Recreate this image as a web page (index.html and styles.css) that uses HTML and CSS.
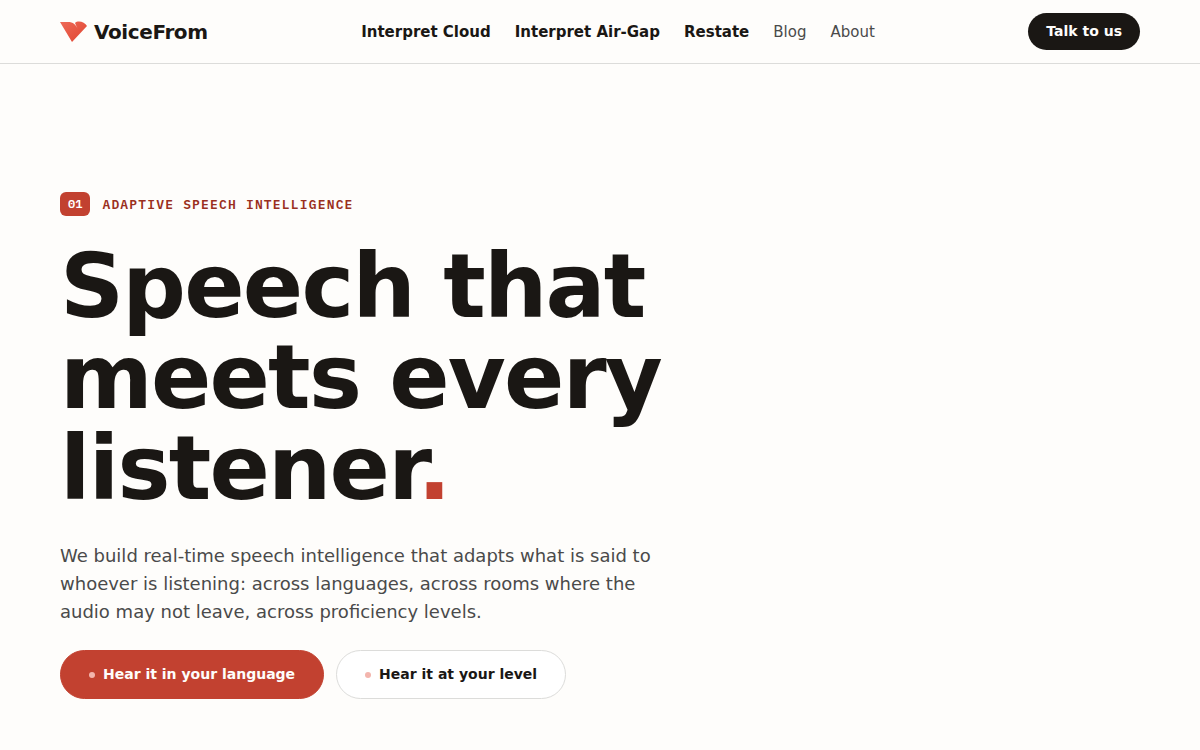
FILE: index.html
```html
<!doctype html>
<html lang="en">
<head>
    <meta charset="UTF-8">
    <meta name="viewport" content="width=device-width, initial-scale=1">
    <title>VoiceFrom</title>
    <link rel="stylesheet" href="styles.css">
</head>
<body>
    <header class="site-header">
        <div class="container nav">
            <a href="#" class="brand">
                <svg class="brand-mark" viewBox="0 0 27 22" aria-hidden="true">
                    <defs>
                        <linearGradient id="mark" x1="0" y1="0" x2="1" y2="1">
                            <stop offset="0" stop-color="#ee6a58"/>
                            <stop offset="1" stop-color="#e0442f"/>
                        </linearGradient>
                    </defs>
                    <path fill="url(#mark)" d="M0 1h8c5 0 8 2 11 10L15 2c3-3 10-1 12 3L12 21z"/>
                </svg>
                VoiceFrom
            </a>
            <nav class="nav-links">
                <a href="#" class="product">Interpret Cloud</a>
                <a href="#" class="product">Interpret Air-Gap</a>
                <a href="#" class="product">Restate</a>
                <a href="#">Blog</a>
                <a href="#">About</a>
            </nav>
            <a href="#" class="talk">Talk to us</a>
        </div>
    </header>
    <main class="container hero">
        <p class="eyebrow"><span class="num">01</span>Adaptive speech intelligence</p>
        <h1>Speech that meets every listener<span class="dot">.</span></h1>
        <p class="lead">We build real-time speech intelligence that adapts what is said to whoever is listening: across languages, across rooms where the audio may not leave, across proficiency levels.</p>
        <div class="actions">
            <button type="button" class="btn btn-primary">Hear it in your language</button>
            <button type="button" class="btn btn-light">Hear it at your level</button>
        </div>
    </main>
</body>
</html>
```
FILE: styles.css
```css
* {
    box-sizing: border-box;
}
body {
    margin: 0;
    background: #fefdfb;
    color: #1a1714;
    font-family: "DejaVu Sans", sans-serif;
}
a {
    color: inherit;
    text-decoration: none;
}
.container {
    max-width: 1200px;
    margin: 0 auto;
    padding: 0 60px;
}
.site-header {
    border-bottom: 1px solid #dcdcda;
}
.nav {
    display: flex;
    align-items: center;
    justify-content: space-between;
    height: 63px;
}
.brand {
    display: flex;
    align-items: center;
    gap: 7px;
    font-size: 20px;
    font-weight: bold;
    letter-spacing: -0.02em;
}
.brand-mark {
    width: 27px;
    height: 22px;
}
.nav-links {
    display: flex;
    gap: 24px;
    font-size: 15px;
    color: #4a4a4a;
}
.nav-links .product {
    color: #1a1714;
    font-weight: bold;
}
.talk {
    padding: 10px 18px;
    border-radius: 20px;
    background: #1a1714;
    color: #fefdfb;
    font-size: 14px;
    line-height: 17px;
    font-weight: bold;
}
.hero {
    padding-top: 128px;
    padding-bottom: 52px;
}
.eyebrow {
    display: flex;
    align-items: center;
    gap: 12px;
    margin: 0 0 25px;
    color: #9a2f20;
    font-family: "IBM Plex Mono", "Liberation Mono", monospace;
    font-size: 13px;
    font-weight: 600;
    letter-spacing: 0.09em;
    text-transform: uppercase;
}
.num {
    padding: 0 8px;
    border-radius: 6px;
    background: #c24130;
    color: #fff;
    font-size: 12px;
    line-height: 24px;
    letter-spacing: 0;
}
h1 {
    max-width: 660px;
    margin: 0 0 28px;
    font-size: 89px;
    line-height: 91px;
    letter-spacing: -0.02em;
}
.dot {
    color: #c24130;
}
.lead {
    max-width: 600px;
    margin: 0 0 24px;
    color: #4a4a4a;
    font-size: 18px;
    line-height: 28px;
}
.actions {
    display: flex;
    flex-wrap: wrap;
    gap: 12px;
}
.btn {
    display: flex;
    align-items: center;
    gap: 8px;
    padding: 0 28px;
    border: 1px solid #c24130;
    border-radius: 25px;
    font: bold 14px/47px "DejaVu Sans", sans-serif;
    cursor: pointer;
}
.btn::before {
    content: "";
    width: 6px;
    height: 6px;
    border-radius: 50%;
    background: #f3b5ad;
}
.btn-primary {
    background: #c24130;
    color: #fefdfb;
}
.btn-light {
    border-color: #dcdcda;
    background: #fff;
    color: #1a1714;
}
```
